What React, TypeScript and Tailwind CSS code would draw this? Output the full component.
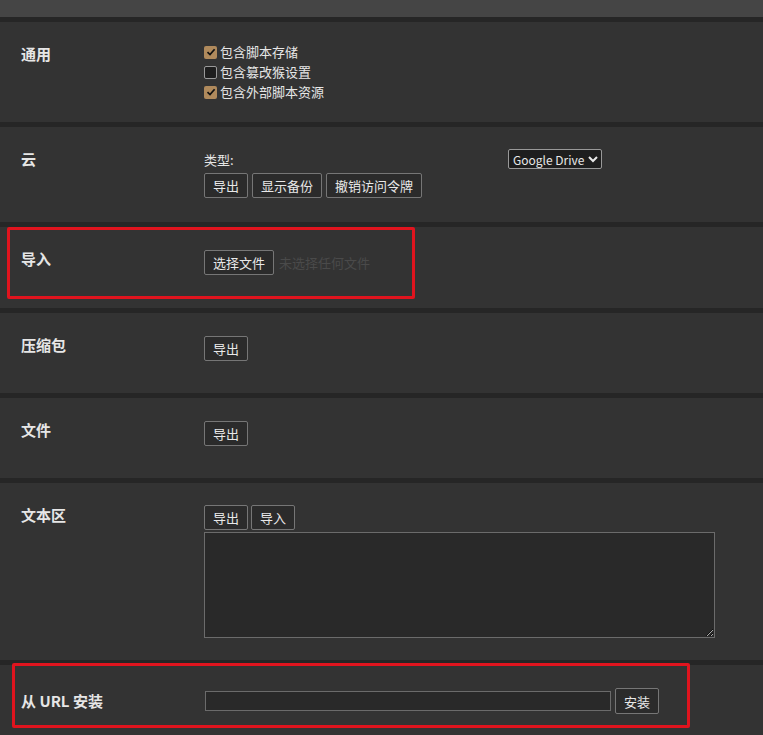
import React from "react";

const F = { fontFamily: '"Noto Sans CJK SC", "Liberation Sans", sans-serif' };

function Btn({ children, cls = "" }: { children: React.ReactNode; cls?: string }) {
  return (
    <button className={"h-[25px] px-[8px] border border-[#767676] rounded-[2px] bg-[#2b2b2b] text-[13px] text-[#e8e8e8] leading-none " + cls}>
      {children}
    </button>
  );
}

function Section({ label, h, children }: { label: string; h: number; children?: React.ReactNode }) {
  return (
    <div className="flex bg-[#333333] pt-[22px]" style={{ height: h }}>
      <div className="w-[204px] pl-[21px] text-[15px] font-bold text-[#e6e6e6] leading-[20px]">{label}</div>
      <div className="flex-1">{children}</div>
    </div>
  );
}

function Cb({ checked, label }: { checked: boolean; label: string }) {
  return (
    <div className="flex items-center gap-[3px] h-[20px] text-[13px] text-[#e6e6e6]">
      {checked ? (
        <span className="w-[13px] h-[13px] rounded-[2px] bg-[#b08a5c] flex items-center justify-center">
          <svg width="10" height="10" viewBox="0 0 10 10"><path d="M1.5 5.2 L4 7.6 L8.6 2.2" stroke="#111" strokeWidth="1.7" fill="none" /></svg>
        </span>
      ) : (
        <span className="w-[13px] h-[13px] rounded-[2px] bg-[#1e1e1e] border border-[#999]" />
      )}
      <span>{label}</span>
    </div>
  );
}

export default function App() {
  return (
    <div className="relative w-[763px] h-[735px] bg-[#262626] overflow-hidden" style={F}>
      <div className="h-[17px] bg-[#454545]" />
      <div className="h-[5px]" />
      <div className="flex flex-col gap-[5px]">
        <Section label="通用" h={100}>
          <div className="-mt-[2px]">
            <Cb checked label="包含脚本存储" />
            <Cb checked={false} label="包含篡改猴设置" />
            <Cb checked label="包含外部脚本资源" />
          </div>
        </Section>
        <Section label="云" h={95}>
          <div className="flex justify-between w-[398px] text-[13px] text-[#e6e6e6] pt-[1px]">
            <span>类型:</span>
            <select className="h-[20px] -mt-[1px] border border-[#999] rounded-[2px] bg-[#1e1e1e] text-[12px] text-[#e8e8e8]">
              <option>Google Drive</option>
            </select>
          </div>
          <div className="flex gap-[4px] mt-[3px]">
            <Btn>导出</Btn>
            <Btn>显示备份</Btn>
            <Btn>撤销访问令牌</Btn>
          </div>
        </Section>
        <Section label="导入" h={81}>
          <div className="flex items-center gap-[5px] pt-[1px]">
            <Btn>选择文件</Btn>
            <span className="text-[13px] text-[#4a4a4a]">未选择任何文件</span>
          </div>
        </Section>
        <Section label="压缩包" h={80}>
          <Btn>导出</Btn>
        </Section>
        <Section label="文件" h={80}>
          <Btn>导出</Btn>
        </Section>
        <Section label="文本区" h={177}>
          <div className="flex gap-[3px]">
            <Btn>导出</Btn>
            <Btn>导入</Btn>
          </div>
          <textarea className="block mt-[2px] w-[511px] h-[106px] bg-[#292929] border border-[#6b6b6b]" />
        </Section>
        <div className="flex bg-[#333333] h-[80px] items-center pb-[8px]">
          <div className="w-[204px] pl-[21px] text-[15px] font-bold text-[#e6e6e6]">从 URL 安装</div>
          <input className="w-[406px] h-[20px] ml-[1px] bg-[#292929] border border-[#6b6b6b]" />
          <Btn cls="ml-[4px] h-[26px]">安装</Btn>
        </div>
      </div>
      <div className="absolute left-[7px] top-[227px] w-[408px] h-[72px] border-[3px] border-[#e0141e] rounded-[2px]" />
      <div className="absolute left-[12px] top-[663px] w-[678px] h-[65px] border-[3px] border-[#e0141e] rounded-[2px]" />
    </div>
  );
}
